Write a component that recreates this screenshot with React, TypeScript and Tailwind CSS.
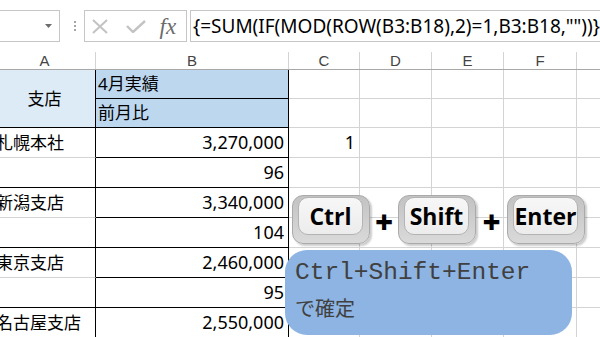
import React from "react";

const rows: { name: string; sales: string; ratio: string | null; c?: string }[] = [
  { name: "札幌本社", sales: "3,270,000", ratio: "96", c: "1" },
  { name: "新潟支店", sales: "3,340,000", ratio: "104" },
  { name: "東京支店", sales: "2,460,000", ratio: "95" },
  { name: "名古屋支店", sales: "2,550,000", ratio: null },
];

const gray = "border-[#d4d4d4]";

const GrayCells = ({ text }: { text?: string }) => (
  <>
    <div className={`border-r border-b ${gray} flex items-center justify-end pr-[4px] text-[18px]`}>
      {text}
    </div>
    <div className={`border-r border-b ${gray}`} />
    <div className={`border-r border-b ${gray}`} />
    <div className={`border-r border-b ${gray}`} />
    <div className={`border-b ${gray}`} />
  </>
);

const Key = ({ label }: { label: string }) => (
  <div className="w-[78px] h-[49px] rounded-[11px] border border-[#aaaaaa] bg-gradient-to-b from-[#c2c2c2] to-[#dadada] shadow-[2px_2px_2px_rgba(0,0,0,0.2)] pl-[5px] pt-[1px]">
    <div className="w-[65px] h-[38px] rounded-[10px] border border-[#b4b4b4] bg-gradient-to-b from-[#f7f7f7] to-[#ececec] flex items-center justify-center">
      <span className="font-['Open_Sans',sans-serif] font-bold text-[23px] text-black leading-none">
        {label}
      </span>
    </div>
  </div>
);

const Plus = ({ w }: { w: string }) => (
  <div className={`${w} flex justify-center pt-[6px]`}>
    <span className="font-['Noto_Sans',sans-serif] font-black text-[31px] leading-none text-black">+</span>
  </div>
);

export default function App() {
  return (
    <div className="relative w-[600px] h-[337px] overflow-hidden bg-white font-['Noto_Sans','Noto_Sans_CJK_JP',sans-serif] text-black">
      {/* formula bar */}
      <div className="flex items-start pt-[10px] h-[50px]">
        <div className="-ml-[2px] w-[64px] h-[32px] border border-[#c6c6c6] flex items-center justify-end pr-[7px]">
          <svg width="7" height="4" viewBox="0 0 7 4">
            <path d="M0 0 L7 0 L3.5 4 Z" fill="#6d6d6d" />
          </svg>
        </div>
        <div className="w-[24px] h-[32px] flex flex-col justify-center gap-[2px] pl-[14px]">
          <div className="w-[2px] h-[2px] bg-[#a6a6a6]" />
          <div className="w-[2px] h-[2px] bg-[#a6a6a6]" />
          <div className="w-[2px] h-[2px] bg-[#a6a6a6]" />
        </div>
        <div className="w-[107px] h-[32px] border border-[#c6c6c6] flex items-center pl-[6px]">
          <svg width="18" height="15" viewBox="0 0 18 15">
            <path d="M2 1 L16 14 M16 1 L2 14" stroke="#c3c3c3" strokeWidth="2" />
          </svg>
          <svg width="20" height="13" viewBox="0 0 20 13" className="ml-[17px]">
            <path d="M1 6 L7 12 L19 1" stroke="#c3c3c3" strokeWidth="2.4" fill="none" />
          </svg>
          <span className="ml-[14px] font-['Liberation_Serif',serif] italic text-[23px] text-[#6b6b6b] leading-none">
            fx
          </span>
        </div>
        <div className="ml-[3px] flex-1 h-[32px] border border-r-0 border-[#c6c6c6] flex items-center pl-[2px] text-[19px] whitespace-nowrap">
          {'{=SUM(IF(MOD(ROW(B3:B18),2)=1,B3:B18,""))}'}
        </div>
      </div>

      {/* column headers */}
      <div className="-ml-[6px] flex items-end h-[20px] border-b border-[#a8a8a8] font-['Liberation_Sans',sans-serif] text-[15px] text-[#444]">
        {[
          ["A", "w-[102px]"],
          ["B", "w-[193px]"],
          ["C", "w-[71px]"],
          ["D", "w-[72px]"],
          ["E", "w-[72px]"],
          ["F", "w-[73px]"],
        ].map(([l, w]) => (
          <div key={l} className={`${w} h-[17px] border-r ${gray} flex items-center justify-center leading-none`}>
            {l}
          </div>
        ))}
      </div>

      {/* sheet */}
      <div className="-ml-[6px] grid grid-cols-[102px_193px_71px_72px_72px_73px_1fr] grid-rows-[29px_29px_repeat(7,30px)] text-[17px]">
        <div className="row-span-2 bg-[#ddebf7] border-r border-b border-black flex items-center justify-center">
          支店
        </div>
        <div className="bg-[#bdd7ee] border-r border-b border-black flex items-center pl-[2px]">4月実績</div>
        <GrayCells />
        <div className="bg-[#bdd7ee] border-r border-b border-black flex items-center pl-[2px]">前月比</div>
        <GrayCells />
        {rows.map((r) => (
          <React.Fragment key={r.name}>
            <div className={`border-r border-black border-b flex items-center pl-[2px] whitespace-nowrap ${r.ratio === null ? "border-b-black" : "border-b-[#d4d4d4]"}`}>
              {r.name}
            </div>
            <div className="border-r border-b border-black flex items-center justify-end pr-[4px] text-[18px]">
              {r.sales}
            </div>
            <GrayCells text={r.c} />
            {r.ratio !== null && (
              <>
                <div className="border-r border-b border-black" />
                <div className="border-r border-b border-black flex items-center justify-end pr-[4px] text-[18px]">
                  {r.ratio}
                </div>
                <GrayCells />
              </>
            )}
          </React.Fragment>
        ))}
      </div>

      {/* key combo overlay */}
      <div className="absolute left-[292px] top-[195px] flex items-center">
        <Key label="Ctrl" />
        <Plus w="w-[28px]" />
        <Key label="Shift" />
        <Plus w="w-[31px]" />
        <Key label="Enter" />
      </div>

      <div className="absolute left-[285px] top-[250px] w-[287px] h-[85px] rounded-[22px] bg-[#8db4e2] pl-[10px] pt-[6px] text-[#404040]">
        <div className="font-['Liberation_Mono',monospace] text-[24.5px] leading-[34px]">Ctrl+Shift+Enter</div>
        <div className="font-['Noto_Sans_CJK_JP',sans-serif] text-[20px] leading-[36px]">で確定</div>
      </div>
    </div>
  );
}
